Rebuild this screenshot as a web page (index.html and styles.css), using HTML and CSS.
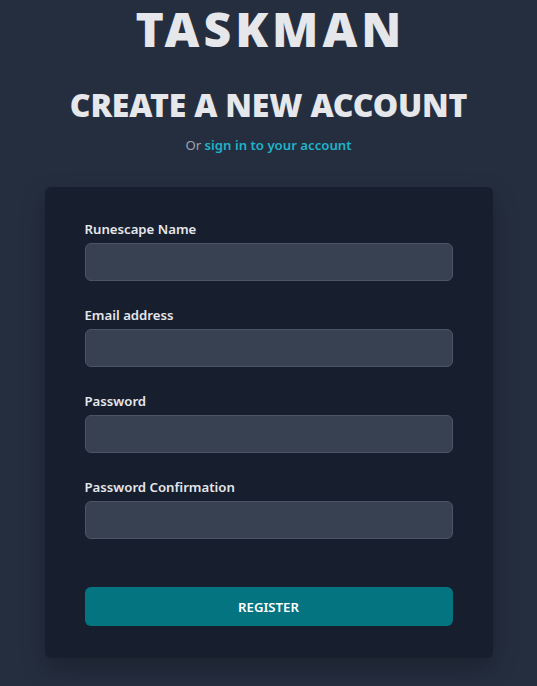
FILE: index.html
```html
<!DOCTYPE html>
<html lang="en">
<head>
<meta charset="utf-8">
<title>Taskman - Register</title>
<link rel="stylesheet" href="styles.css">
</head>
<body>
<main class="page">
  <header class="head">
    <h1 class="brand">TASKMAN</h1>
    <h2 class="title">CREATE A NEW ACCOUNT</h2>
    <p class="sub">Or <a href="#" class="link">sign in to your account</a></p>
  </header>
  <form class="card">
    <div class="field">
      <label class="label" for="name">Runescape Name</label>
      <input class="input" id="name" type="text">
    </div>
    <div class="field">
      <label class="label" for="email">Email address</label>
      <input class="input" id="email" type="email">
    </div>
    <div class="field">
      <label class="label" for="pw">Password</label>
      <input class="input" id="pw" type="password">
    </div>
    <div class="field">
      <label class="label" for="pw2">Password Confirmation</label>
      <input class="input" id="pw2" type="password">
    </div>
    <button class="btn" type="button">REGISTER</button>
  </form>
</main>
</body>
</html>
```
FILE: styles.css
```css
html, body {
  margin: 0;
  padding: 0;
  height: 100%;
}
body {
  background: #252e3f;
  font-family: "Noto Sans", "Open Sans", sans-serif;
  color: #e5e7eb;
}
.page {
  display: flex;
  flex-direction: column;
  align-items: center;
}
.head {
  display: flex;
  flex-direction: column;
  align-items: center;
}
.brand {
  margin: 0;
  font-size: 48px;
  line-height: 58px;
  font-weight: 900;
  letter-spacing: 4px;
  padding-left: 4px;
  color: #e5e7eb;
}
.title {
  margin: 29px 0 0;
  font-size: 32px;
  line-height: 36px;
  font-weight: 900;
  letter-spacing: -0.2px;
  color: #e5e7eb;
}
.sub {
  margin: 12px 0 0;
  font-size: 13.2px;
  line-height: 20px;
  color: #9ca3af;
}
.link {
  color: #1fb3c9;
  font-weight: 600;
  text-decoration: none;
}
.card {
  box-sizing: border-box;
  width: 448px;
  margin-top: 32px;
  padding: 32px 40px;
  background: #171e2e;
  border-radius: 6px;
  box-shadow: 0 10px 25px rgba(0, 0, 0, 0.25);
  display: flex;
  flex-direction: column;
  gap: 24px;
}
.field {
  display: flex;
  flex-direction: column;
  gap: 4px;
}
.label {
  font-size: 13.2px;
  line-height: 20px;
  font-weight: 600;
  color: #e5e7eb;
}
.input {
  box-sizing: border-box;
  height: 38px;
  width: 100%;
  background: #374151;
  border: 1px solid #4b5563;
  border-radius: 6px;
  color: #e5e7eb;
  font: inherit;
  padding: 0 12px;
}
.btn {
  margin-top: 24px;
  height: 39px;
  width: 100%;
  border: 0;
  border-radius: 6px;
  background: #047481;
  color: #fff;
  font-family: inherit;
  font-size: 13.2px;
  font-weight: 600;
}
```
